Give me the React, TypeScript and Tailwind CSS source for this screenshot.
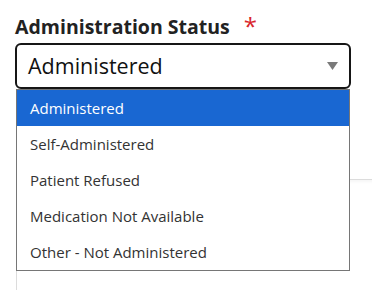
import React from 'react';

const OPTIONS = [
  'Administered',
  'Self-Administered',
  'Patient Refused',
  'Medication Not Available',
  'Other - Not Administered',
];

export default function App() {
  const selected = 'Administered';

  return (
    <div
      className="w-[372px] h-[290px] overflow-hidden bg-white relative"
      style={{ fontFamily: '"Open Sans", "Noto Sans", sans-serif' }}
    >
      <div className="pl-[15px] pt-[14px]">
        <div className="flex items-start h-[25px]">
          <span className="text-[19.5px] font-bold text-[#222] leading-[25px]">Administration Status</span>
          <span className="ml-[14px] text-[24px] text-[#d9262c] leading-[22px] mt-[1px]">*</span>
        </div>

        <div className="relative mt-[4px] w-[336px]">
          <div className="h-[46px] border-2 border-[#161616] rounded-[6px] flex items-center justify-between pl-[11px] pr-[11px]">
            <span className="text-[21.5px] text-[#111] leading-none">{selected}</span>
            <svg width="11" height="8" viewBox="0 0 11 8">
              <path d="M0 0 L11 0 L5.5 8 Z" fill="#7a7a7a" />
            </svg>
          </div>

          {/* open listbox */}
          <ul className="absolute left-[1px] top-[46px] w-[334px] border border-[#767676] bg-white z-10">
            {OPTIONS.map((opt) => (
              <li
                key={opt}
                className={`h-[36px] flex items-center pl-[13px] text-[15px] ${
                  opt === selected ? 'bg-[#1967d2] text-white' : 'text-[#333]'
                }`}
              >
                {opt}
              </li>
            ))}
          </ul>
        </div>

        {/* card behind the menu */}
        <div className="mt-[90px] ml-[1px] w-[400px] h-[200px] border border-[#dcdcdc] rounded-tl-[3px] shadow-[inset_0_4px_4px_-3px_rgba(0,0,0,0.06)]" />
      </div>
    </div>
  );
}
